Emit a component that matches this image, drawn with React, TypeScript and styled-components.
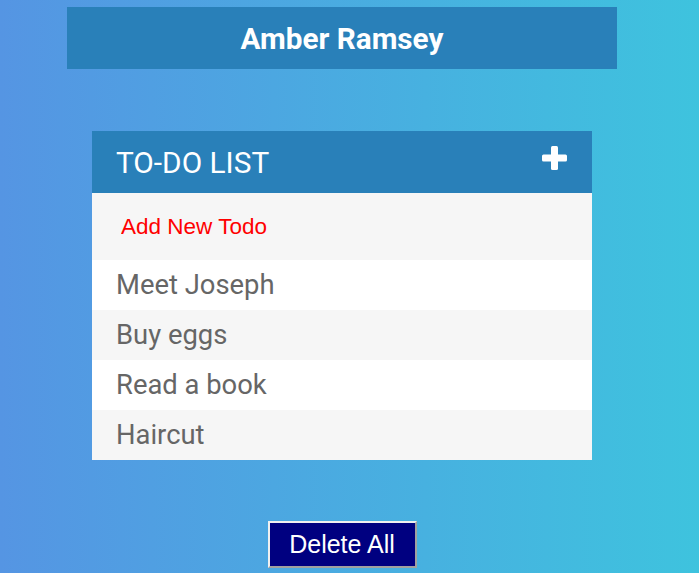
import styled, { createGlobalStyle } from "styled-components";

const todos = ["Meet Joseph", "Buy eggs", "Read a book", "Haircut"];

export default function App() {
  return (
    <>
      <GlobalStyle />
      <Page>
        <UserBar>
          <UserName>Amber Ramsey</UserName>
        </UserBar>
        <Card>
          <CardHeader>
            <CardTitle>TO-DO LIST</CardTitle>
            <AddIcon width="25" height="24" viewBox="0 0 25 24">
              <rect x="9" y="0" width="7" height="24" rx="1.5" fill="#fff" />
              <rect x="0" y="8.5" width="25" height="7" rx="1.5" fill="#fff" />
            </AddIcon>
          </CardHeader>
          <InputRow>
            <TodoInput placeholder="Add New Todo" />
          </InputRow>
          {todos.map((todo, i) => (
            <TodoItem key={todo} $shaded={i % 2 === 1}>
              {todo}
            </TodoItem>
          ))}
        </Card>
        <DeleteButton type="button">Delete All</DeleteButton>
      </Page>
    </>
  );
}

const GlobalStyle = createGlobalStyle`
  html, body {
    margin: 0;
    height: 100%;
  }
  body {
    background: linear-gradient(to right, #5595e3, #3ec3de);
    font-family: Roboto, "Liberation Sans", sans-serif;
    overflow: hidden;
  }
`;

const Page = styled.div`
  width: 684px;
  padding-top: 7px;
  display: flex;
  flex-direction: column;
  align-items: center;
`;

const UserBar = styled.div`
  width: 550px;
  height: 62px;
  background: #2980b9;
  display: flex;
  align-items: center;
  justify-content: center;
`;

const UserName = styled.h1`
  margin: 0;
  font-family: Roboto, sans-serif;
  font-size: 29.7px;
  font-weight: 700;
  color: #fff;
`;

const Card = styled.div`
  width: 500px;
  margin-top: 62px;
  display: flex;
  flex-direction: column;
`;

const CardHeader = styled.div`
  height: 62px;
  padding: 0 25px 0 24px;
  background: #2980b9;
  display: flex;
  align-items: center;
  justify-content: space-between;
`;

const CardTitle = styled.h2`
  margin: 0;
  font-family: Roboto, sans-serif;
  font-size: 29.8px;
  font-weight: 400;
  color: #fff;
`;

const AddIcon = styled.svg`
  margin-top: -9px;
`;

const InputRow = styled.div`
  height: 67px;
  background: #f6f6f6;
  display: flex;
  align-items: center;
`;

const TodoInput = styled.input`
  width: 100%;
  border: none;
  outline: none;
  background: transparent;
  padding: 0 0 0 29px;
  font-family: "Liberation Sans", Arial, sans-serif;
  font-size: 22.5px;
  color: #333;

  &::placeholder {
    color: #ff0000;
  }
`;

const TodoItem = styled.div<{ $shaded: boolean }>`
  height: 50px;
  padding: 0 24px;
  display: flex;
  align-items: center;
  background: ${(p) => (p.$shaded ? "#f6f6f6" : "#fff")};
  font-family: Roboto, sans-serif;
  font-size: 27.4px;
  color: #666;
`;

const DeleteButton = styled.button`
  margin-top: 61px;
  width: 149px;
  height: 47px;
  padding: 0;
  background: #000080;
  color: #fff;
  font-family: "Liberation Sans", Arial, sans-serif;
  font-size: 25px;
  border: 2px solid;
  border-color: #f0f0f0 #a0a0a0 #a0a0a0 #f0f0f0;
  cursor: pointer;
`;
